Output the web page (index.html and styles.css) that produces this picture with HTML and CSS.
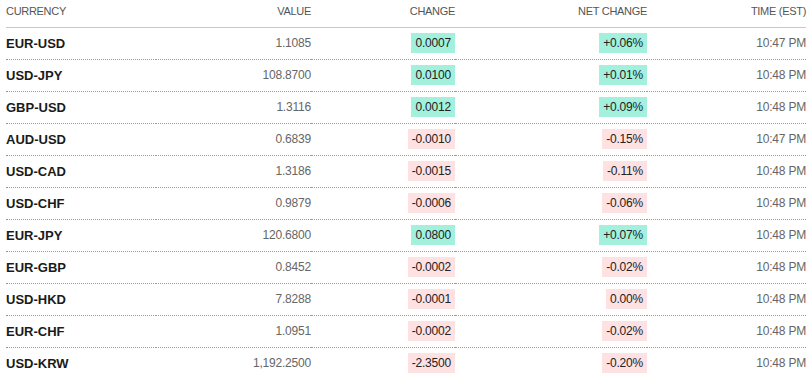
FILE: index.html
```html
<!DOCTYPE html>
<html lang="en">
<head>
    <meta charset="UTF-8">
    <title>Currencies</title>
    <link rel="stylesheet" href="styles.css">
</head>
<body>
    <table class="fx-table">
        <colgroup>
            <col class="col-currency">
            <col class="col-value">
            <col class="col-change">
            <col class="col-net">
            <col class="col-time">
        </colgroup>
        <thead>
            <tr>
                <th class="left">Currency</th>
                <th>Value</th>
                <th>Change</th>
                <th>Net Change</th>
                <th>Time (EST)</th>
            </tr>
        </thead>
        <tbody>
            <tr><td class="pair">EUR-USD</td><td class="value">1.1085</td><td><span class="badge up">0.0007</span></td><td><span class="badge up">+0.06%</span></td><td class="time">10:47 PM</td></tr>
            <tr><td class="pair">USD-JPY</td><td class="value">108.8700</td><td><span class="badge up">0.0100</span></td><td><span class="badge up">+0.01%</span></td><td class="time">10:48 PM</td></tr>
            <tr><td class="pair">GBP-USD</td><td class="value">1.3116</td><td><span class="badge up">0.0012</span></td><td><span class="badge up">+0.09%</span></td><td class="time">10:48 PM</td></tr>
            <tr><td class="pair">AUD-USD</td><td class="value">0.6839</td><td><span class="badge down">-0.0010</span></td><td><span class="badge down">-0.15%</span></td><td class="time">10:47 PM</td></tr>
            <tr><td class="pair">USD-CAD</td><td class="value">1.3186</td><td><span class="badge down">-0.0015</span></td><td><span class="badge down">-0.11%</span></td><td class="time">10:48 PM</td></tr>
            <tr><td class="pair">USD-CHF</td><td class="value">0.9879</td><td><span class="badge down">-0.0006</span></td><td><span class="badge down">-0.06%</span></td><td class="time">10:48 PM</td></tr>
            <tr><td class="pair">EUR-JPY</td><td class="value">120.6800</td><td><span class="badge up">0.0800</span></td><td><span class="badge up">+0.07%</span></td><td class="time">10:48 PM</td></tr>
            <tr><td class="pair">EUR-GBP</td><td class="value">0.8452</td><td><span class="badge down">-0.0002</span></td><td><span class="badge down">-0.02%</span></td><td class="time">10:48 PM</td></tr>
            <tr><td class="pair">USD-HKD</td><td class="value">7.8288</td><td><span class="badge down">-0.0001</span></td><td><span class="badge down">0.00%</span></td><td class="time">10:48 PM</td></tr>
            <tr><td class="pair">EUR-CHF</td><td class="value">1.0951</td><td><span class="badge down">-0.0002</span></td><td><span class="badge down">-0.02%</span></td><td class="time">10:48 PM</td></tr>
            <tr><td class="pair">USD-KRW</td><td class="value">1,192.2500</td><td><span class="badge down">-2.3500</span></td><td><span class="badge down">-0.20%</span></td><td class="time">10:48 PM</td></tr>
        </tbody>
    </table>
</body>
</html>
```

FILE: styles.css
```css
:root {
    --text: #1a1a1a; --muted: #666666; --head: #555555;
    --rule: #c8c8c8; --dots: #9a9a9a;
    --up-bg: #a3f1dd; --down-bg: #ffe1e1;
}
body { margin: 0; padding: 0 5px 0 6px; background: #ffffff; color: var(--text); font-family: "Liberation Sans", Arial, sans-serif; }
.fx-table { width: 100%; border-collapse: collapse; table-layout: fixed; }
.col-currency { width: 150px; }
.col-value { width: 155px; }
.col-change { width: 144px; }
.col-net { width: 192px; }
.col-time { width: 159px; }
.fx-table th { height: 27px; padding: 0 0 5px; box-sizing: border-box; font-size: 11px; font-weight: normal; text-transform: uppercase; color: var(--head); letter-spacing: -0.3px; text-align: right; vertical-align: middle; border-bottom: 1px solid var(--rule); }
.fx-table th.left { text-align: left; }
.fx-table td { height: 31px; padding: 0; font-size: 12px; text-align: right; vertical-align: middle; border-bottom: 1px dotted var(--dots); letter-spacing: -0.2px; }
.fx-table tbody tr:last-child td { border-bottom: none; }
.fx-table td.pair { text-align: left; font-size: 13px; font-weight: bold; letter-spacing: 0; }
.value, .time { color: var(--muted); }
.badge { display: inline-block; height: 20px; line-height: 20px; padding: 0 4px; color: #222222; }
.badge.up { background: var(--up-bg); }
.badge.down { background: var(--down-bg); }
```
